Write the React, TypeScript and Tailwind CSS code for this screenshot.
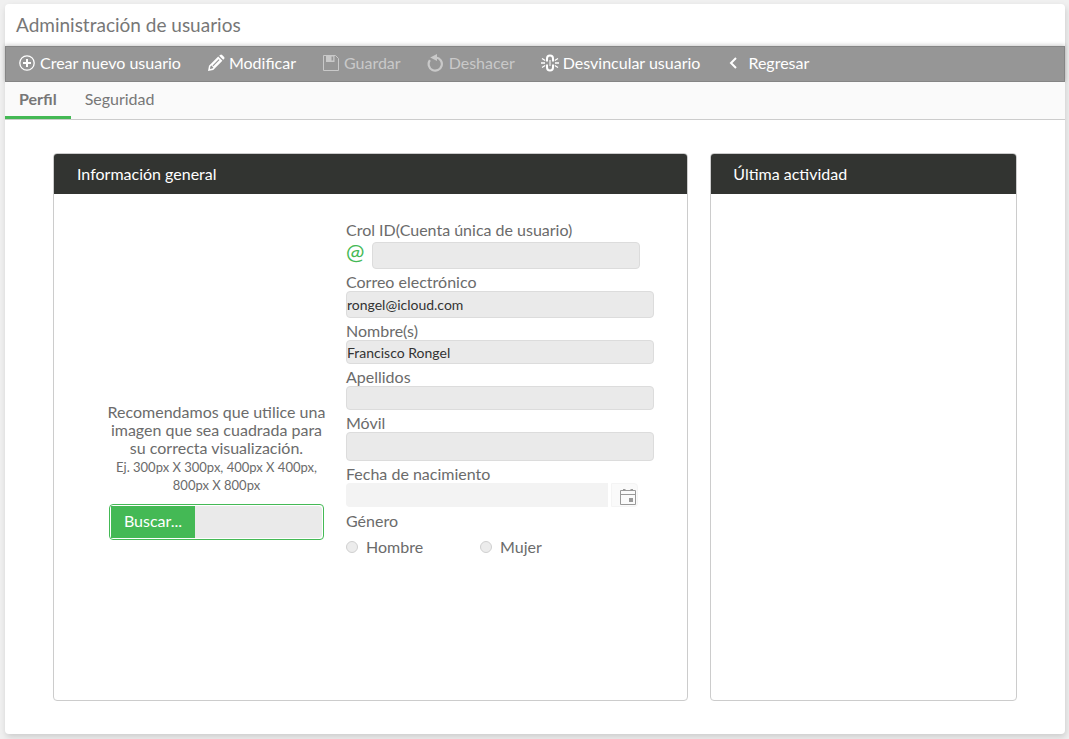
import React, { useState } from "react";

interface ToolbarButtonProps {
  label: string;
  icon: React.ReactNode;
  disabled?: boolean;
}

const ToolbarButton: React.FC<ToolbarButtonProps> = ({ label, icon, disabled }) => {
  return (
    <button
      type="button"
      disabled={disabled}
      className="flex items-center gap-1 whitespace-nowrap text-white disabled:text-[#c9c9c9]"
    >
      {icon}
      {label}
    </button>
  );
};

interface FieldProps {
  id: string;
  label: string;
  value?: string;
  height?: string;
}

const Field: React.FC<FieldProps> = ({ id, label, value = "", height = "h-6" }) => {
  return (
    <div className="flex flex-col">
      <label htmlFor={id}>{label}</label>
      <input
        id={id}
        type="text"
        readOnly
        value={value}
        className={`${height} w-full rounded border border-[#dcdcdc] bg-[#eaeaea] text-sm text-[#333]`}
      />
    </div>
  );
};

const PlusIcon = () => (
  <svg width="18" height="18" viewBox="0 0 18 18" fill="none" stroke="currentColor">
    <circle cx="9" cy="9" r="7.2" strokeWidth="1.3" />
    <path d="M9 5v8M5 9h8" strokeWidth="2" />
  </svg>
);

const PencilIcon = () => (
  <svg width="18" height="18" viewBox="0 0 18 18" fill="currentColor">
    <path
      fillRule="evenodd"
      d="M1 17l1-5.200L11.200 2.600l4.200 4.200L6.200 16zM3.400 12.600l-.5 2.500 2.500-.5 1-1-2-2zM5.500 11.500l.8.8 6.200-6.200-.8-.8z"
    />
    <path d="M12.200 1.800l.9-.9a1.500 1.500 0 0 1 2 0l2 2a1.500 1.500 0 0 1 0 2l-.9.9z" />
  </svg>
);

const SaveIcon = () => (
  <svg width="18" height="18" viewBox="0 0 18 18">
    <path d="M1.500 1.500h12l3 3v12h-15z" fill="none" stroke="currentColor" />
    <path fill="currentColor" fillRule="evenodd" d="M4 1.500h8.500V8H4zM9.500 2.500v4h1.700v-4z" />
  </svg>
);

const UndoIcon = () => (
  <svg width="18" height="18" viewBox="0 0 18 18">
    <path d="M2.900 6.200A6.600 6.600 0 1 0 9 3.500" fill="none" stroke="currentColor" strokeWidth="2.200" />
    <path d="M3.200 3.600L10 0v7z" fill="currentColor" />
  </svg>
);

const UnlinkIcon = () => (
  <svg width="18" height="18" viewBox="0 0 18 18" fill="none" stroke="currentColor">
    <path d="M6 7.500V4.500a3 3 0 0 1 6 0v3M6 10.500v3a3 3 0 0 0 6 0v-3" strokeWidth="2" />
    <path d="M9 6v6" strokeWidth="1" />
    <path d="M0 9h4M14 9h4M1 4.500l3.200 2M17 4.500l-3.200 2M1 13.500l3.200-2M17 13.500l-3.200-2" strokeWidth="1.300" />
  </svg>
);

const BackIcon = () => (
  <svg width="18" height="18" viewBox="0 0 18 18" fill="none" stroke="currentColor" strokeWidth="2">
    <path d="M10 4L5 9l5 5" />
  </svg>
);

const CalendarIcon = () => (
  <svg width="18" height="18" viewBox="0 0 18 18" fill="none" stroke="currentColor">
    <path d="M1.500 2.500h15v14h-15zM1.500 6.500h15" />
    <path d="M4 2h2.500M11.500 2H14" strokeWidth="2" />
    <path d="M10 10h4v4h-4z" fill="currentColor" stroke="none" />
  </svg>
);

const App: React.FC = () => {
  const [activeTab, setActiveTab] = useState("perfil");

  const tabClass = (tab: string) =>
    activeTab === tab
      ? "border-b-[3px] border-[#44b955] px-[14px] font-bold"
      : "border-b-[3px] border-transparent px-[14px]";

  return (
    <div className="min-h-screen bg-[#f0f0f0] pt-1 pr-1 pb-[5px] pl-[5px] font-['Lato',sans-serif] text-base leading-[18px] text-[#6b6b6b]">
      <main className="flex min-h-[730px] flex-col rounded bg-white shadow-[1px_3px_6px_rgba(0,0,0,0.15)]">
        <h1 className="px-[11px] pt-[9px] pb-[9px] text-[19px] leading-6 text-[#777]">Administración de usuarios</h1>

        {/* Toolbar */}
        <div className="flex h-9 items-center gap-[26px] border border-[#858585] bg-[#969696] px-3 pb-[2px] shadow-[0_-1px_4px_rgba(0,0,0,0.2)]">
          <ToolbarButton label="Crear nuevo usuario" icon={<PlusIcon />} />
          <ToolbarButton label="Modificar" icon={<PencilIcon />} />
          <ToolbarButton label="Guardar" icon={<SaveIcon />} disabled />
          <ToolbarButton label="Deshacer" icon={<UndoIcon />} disabled />
          <ToolbarButton label="Desvincular usuario" icon={<UnlinkIcon />} />
          <ToolbarButton label="Regresar" icon={<BackIcon />} />
        </div>

        {/* Tabs */}
        <nav className="flex h-[38px] border-b border-[#ccc] bg-[#fafafa] text-[#777]">
          <button type="button" className={tabClass("perfil")} onClick={() => setActiveTab("perfil")}>
            Perfil
          </button>
          <button type="button" className={tabClass("seguridad")} onClick={() => setActiveTab("seguridad")}>
            Seguridad
          </button>
        </nav>

        <div className="flex flex-1 gap-[22px] px-12 pt-[33px] pb-[33px]">
          <section className="flex-[636] overflow-hidden rounded border border-[#ccc]">
            <h2 className="h-10 bg-[#323431] px-[23px] leading-10 text-white">Información general</h2>
            <div className="flex gap-[22px] pt-[27px] pr-[33px] pl-[55px]">
              {/* Profile picture */}
              <div className="w-[215px] shrink-0 text-center">
                <div className="h-[182px]" />
                <p className="-mx-2">
                  Recomendamos que utilice una
                  <br />
                  imagen que sea cuadrada para
                  <br />
                  su correcta visualización.
                </p>
                <p className="pt-px text-[13px]">Ej. 300px X 300px, 400px X 400px, 800px X 800px</p>
                <div className="mt-[10px] flex h-9 rounded border border-[#44b955] p-px">
                  <button type="button" className="w-[84px] shrink-0 bg-[#44b955] pb-[2px] text-white">
                    Buscar...
                  </button>
                  <input
                    type="text"
                    readOnly
                    aria-label="Imagen seleccionada"
                    className="min-w-0 flex-1 rounded-r bg-[#eaeaea]"
                  />
                </div>
              </div>

              {/* User data */}
              <form className="flex flex-1 flex-col gap-1">
                <div>
                  <label htmlFor="crol-id">Crol ID(Cuenta única de usuario)</label>
                  <div className="mt-[3px] flex items-start gap-2 pr-[14px]">
                    <span className="w-[18px] text-[22px] leading-5 text-[#44b955]">@</span>
                    <input
                      id="crol-id"
                      type="text"
                      readOnly
                      className="h-[27px] min-w-0 flex-1 rounded border border-[#dcdcdc] bg-[#eaeaea]"
                    />
                  </div>
                </div>
                <Field id="correo" label="Correo electrónico" value="rongel@icloud.com" height="h-[27px]" />
                <Field id="nombre" label="Nombre(s)" value="Francisco Rongel" />
                <Field id="apellidos" label="Apellidos" />
                <Field id="movil" label="Móvil" height="h-[29px]" />
                <div className="flex flex-col">
                  <label htmlFor="fecha">Fecha de nacimiento</label>
                  <div className="flex h-6 gap-[3px] pr-4">
                    <input
                      id="fecha"
                      type="text"
                      readOnly
                      className="min-w-0 flex-1 rounded-l bg-[#f3f3f3]"
                    />
                    <button
                      type="button"
                      aria-label="Abrir calendario"
                      className="flex w-[27px] items-center justify-center rounded-r border border-[#f4f4f4] bg-[#fafafa] pt-1 pl-[6px] text-[#999]"
                    >
                      <CalendarIcon />
                    </button>
                  </div>
                </div>
                <fieldset>
                  <legend className="pt-px">Género</legend>
                  <div className="flex pt-2">
                    <label className="flex w-[134px] items-center gap-2">
                      <input
                        type="radio"
                        name="genero"
                        className="size-3 appearance-none rounded-full border border-[#d0d0d0] bg-[#ececec] checked:bg-[#44b955]"
                      />
                      Hombre
                    </label>
                    <label className="flex items-center gap-2">
                      <input
                        type="radio"
                        name="genero"
                        className="size-3 appearance-none rounded-full border border-[#d0d0d0] bg-[#ececec] checked:bg-[#44b955]"
                      />
                      Mujer
                    </label>
                  </div>
                </fieldset>
              </form>
            </div>
          </section>

          <section className="flex-[306] overflow-hidden rounded border border-[#ccc]">
            <h2 className="h-10 bg-[#323431] px-[22px] leading-10 text-white">Última actividad</h2>
          </section>
        </div>
      </main>
    </div>
  );
};

export default App;
